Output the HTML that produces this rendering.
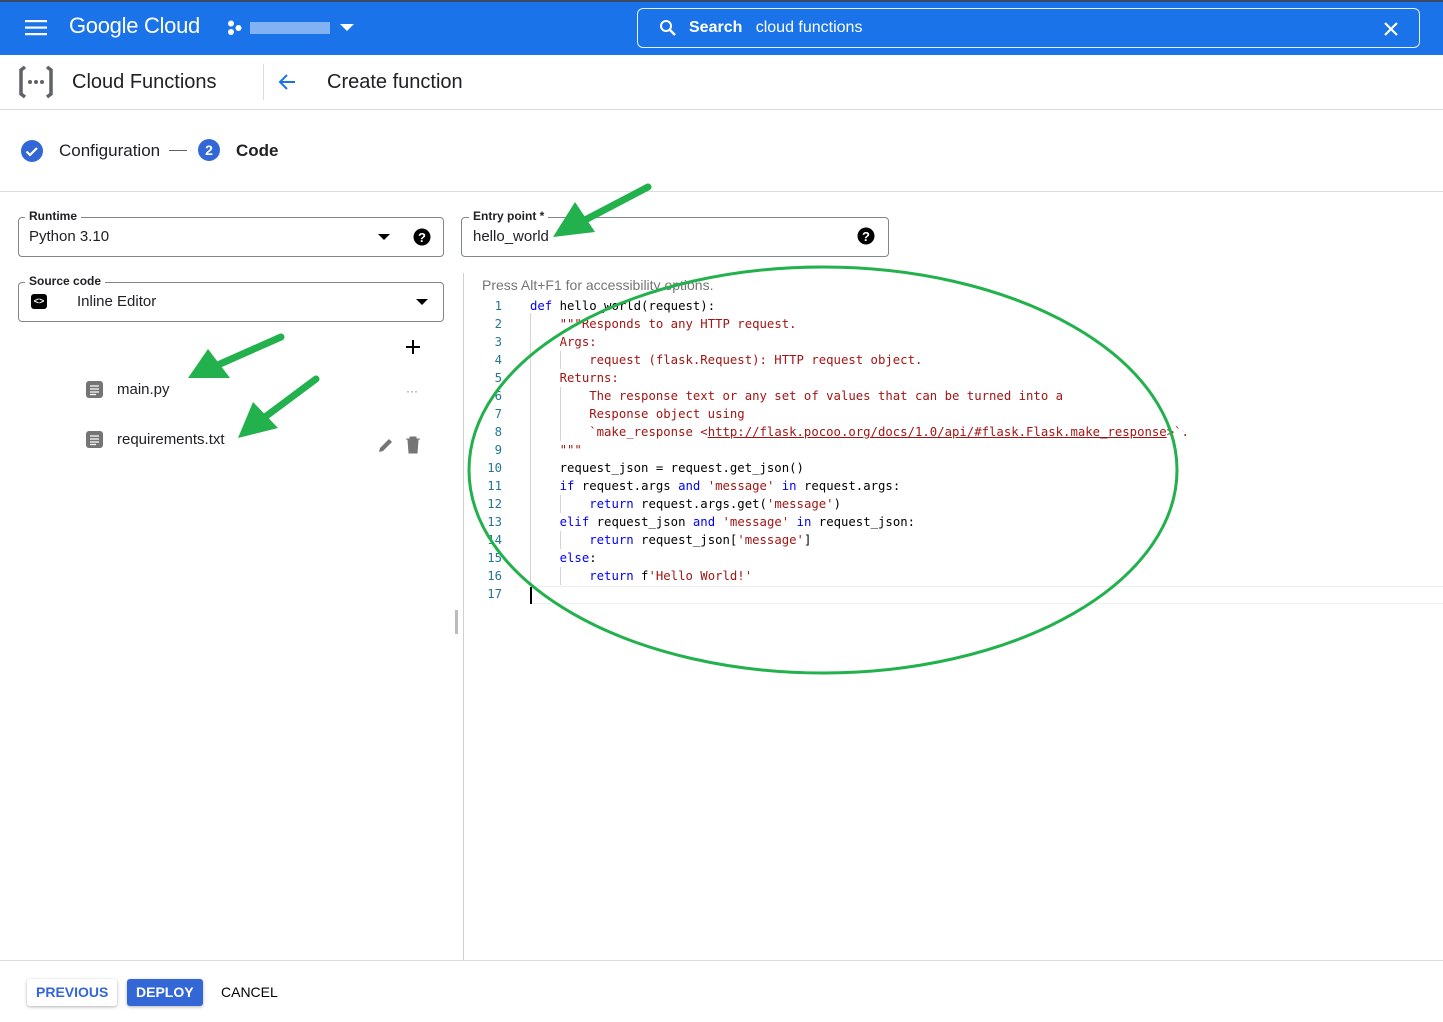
<!DOCTYPE html>
<html><head><meta charset="utf-8"><style>
*{box-sizing:border-box;margin:0;padding:0}
body{width:1443px;height:1022px;position:relative;background:#fff;font-family:"Liberation Sans",Roboto,sans-serif;color:#202124;overflow:hidden}
.a{position:absolute}
.hdr{left:0;top:0;width:1443px;height:55px;background:#1a73e8;border-top:2px solid #3c4a66}
.fld{border:1px solid #80868b;border-radius:4px}
.lbl{font-size:12px;font-weight:bold;background:#fff;padding:0 4px;color:#202124}
.code{font-family:"DejaVu Sans Mono",monospace;font-size:12.3px;line-height:18px;white-space:pre;color:#000}
.ln{font-family:"DejaVu Sans Mono",monospace;font-size:12.3px;line-height:18px;color:#237893;text-align:right;width:40px;white-space:pre}
.k{color:#0000ff}.s{color:#a31515}
.btn{font-size:14px;font-weight:bold;height:27px;line-height:27px;padding:0 9px;border-radius:3px}
</style></head><body>
<div class="a hdr"></div>
<svg class="a" style="left:25px;top:19px" width="24" height="18"><rect y="1" width="22" height="2.2" fill="#fff"/><rect y="7.5" width="22" height="2.2" fill="#fff"/><rect y="14" width="22" height="2.2" fill="#fff"/></svg>
<div class="a" style="left:69px;top:13px;color:#fff;font-size:22px;letter-spacing:-0.3px">Google Cloud</div>
<svg class="a" style="left:227px;top:20px" width="16" height="16"><circle cx="4" cy="3.5" r="3" fill="#fff"/><circle cx="4" cy="12" r="3" fill="#fff"/><circle cx="11.5" cy="8" r="3" fill="#fff"/></svg>
<div class="a" style="left:250px;top:22px;width:80px;height:12px;background:#9cc2f5;opacity:.8"></div>
<svg class="a" style="left:340px;top:24px" width="14" height="8"><path d="M0 0h14L7 7z" fill="#fff"/></svg>
<div class="a" style="left:637px;top:8px;width:783px;height:40px;border:1px solid #e8f0fe;border-radius:6px"></div>
<svg class="a" style="left:659px;top:19px" width="18" height="18"><circle cx="7" cy="7" r="5" stroke="#fff" stroke-width="2" fill="none"/><path d="M11 11l5 5" stroke="#fff" stroke-width="2.4"/></svg>
<div class="a" style="left:689px;top:19px;color:#fff;font-size:16px"><b>Search</b>&nbsp;&nbsp; cloud functions</div>
<svg class="a" style="left:1383px;top:21px" width="16" height="16"><path d="M2 2l12 12M14 2L2 14" stroke="#fff" stroke-width="2.2"/></svg>

<svg class="a" style="left:18px;top:65px" width="36" height="34"><path d="M7 2L3 5v24l4 3M29 2l4 3v24l-4 3" stroke="#5f6368" stroke-width="3.5" fill="none"/><circle cx="12" cy="17" r="2" fill="#5f6368"/><circle cx="18" cy="17" r="2" fill="#5f6368"/><circle cx="24" cy="17" r="2" fill="#5f6368"/></svg>
<div class="a" style="left:72px;top:71px;font-size:20px">Cloud Functions</div>
<div class="a" style="left:263px;top:64px;width:1px;height:36px;background:#dadce0"></div>
<svg class="a" style="left:277px;top:73px" width="20" height="18"><path d="M18 9H3M10 2L3 9l7 7" stroke="#1a73e8" stroke-width="2" fill="none"/></svg>
<div class="a" style="left:327px;top:71px;font-size:20px">Create function</div>
<div class="a" style="left:0;top:109px;width:1443px;height:1px;background:#dadce0"></div>

<svg class="a" style="left:20px;top:139px" width="24" height="24"><circle cx="12" cy="12" r="11" fill="#3367d6"/><path d="M6.5 12.5l3.5 3.5 7-7" stroke="#fff" stroke-width="2.2" fill="none"/></svg>
<div class="a" style="left:59px;top:141px;font-size:17px">Configuration</div>
<div class="a" style="left:169px;top:150px;width:18px;height:1px;background:#5f6368"></div>
<div class="a" style="left:198px;top:139px;width:22px;height:22px;border-radius:50%;background:#3367d6;color:#fff;font-size:14px;font-weight:bold;text-align:center;line-height:22px">2</div>
<div class="a" style="left:236px;top:141px;font-size:17px;font-weight:bold">Code</div>
<div class="a" style="left:0;top:191px;width:1443px;height:1px;background:#dadce0"></div>

<div class="a fld" style="left:18px;top:217px;width:426px;height:40px"></div>
<div class="a lbl" style="left:25px;top:209px">Runtime</div>
<div class="a" style="left:29px;top:228px;font-size:15px">Python 3.10</div>
<svg class="a" style="left:378px;top:234px" width="12" height="6"><path d="M0 0h12L6 6z" fill="#000"/></svg>
<svg class="a" style="left:413px;top:228px" width="18" height="18"><circle cx="9" cy="9" r="8.5"/><text x="9" y="14" fill="#fff" font-size="13" font-weight="bold" text-anchor="middle" font-family="Liberation Sans">?</text></svg>

<div class="a fld" style="left:18px;top:282px;width:426px;height:40px"></div>
<div class="a lbl" style="left:25px;top:274px">Source code</div>
<div class="a" style="left:31px;top:294px;width:16px;height:15px;background:#000;border-radius:3px;color:#fff;font-size:9px;font-weight:bold;text-align:center;line-height:15px">&lt;&gt;</div>
<div class="a" style="left:77px;top:293px;font-size:15px">Inline Editor</div>
<svg class="a" style="left:416px;top:299px" width="12" height="6"><path d="M0 0h12L6 6z" fill="#000"/></svg>

<svg class="a" style="left:405px;top:339px" width="16" height="16"><path d="M8 1v14M1 8h14" stroke="#000" stroke-width="2"/></svg>
<svg class="a" style="left:86px;top:381px" width="17" height="17"><rect width="17" height="17" rx="3" fill="#757575"/><path d="M4 5h9M4 8h9M4 11h9M4 13.5h6" stroke="#fff" stroke-width="1.2"/></svg>
<div class="a" style="left:117px;top:381px;font-size:15px">main.py</div>
<div class="a" style="left:406px;top:384px;font-size:12px;color:#757575">···</div>
<svg class="a" style="left:86px;top:431px" width="17" height="17"><rect width="17" height="17" rx="3" fill="#757575"/><path d="M4 5h9M4 8h9M4 11h9M4 13.5h6" stroke="#fff" stroke-width="1.2"/></svg>
<div class="a" style="left:117px;top:431px;font-size:15px">requirements.txt</div>
<svg class="a" style="left:377px;top:436px" width="18" height="18"><path d="M2 16l1-4 9-9 3 3-9 9z" fill="#757575"/></svg>
<svg class="a" style="left:405px;top:436px" width="16" height="18"><path d="M1 3h14M5 3V1h6v2M3 4h10l-1 13H4z" fill="#757575" stroke="#757575"/></svg>

<div class="a fld" style="left:461px;top:217px;width:428px;height:40px"></div>
<div class="a lbl" style="left:469px;top:209px">Entry point *</div>
<div class="a" style="left:473px;top:228px;font-size:15px">hello_world</div>
<svg class="a" style="left:857px;top:227px" width="18" height="18"><circle cx="9" cy="9" r="8.5"/><text x="9" y="14" fill="#fff" font-size="13" font-weight="bold" text-anchor="middle" font-family="Liberation Sans">?</text></svg>

<div class="a" style="left:463px;top:273px;width:1px;height:687px;background:#d0d0d0"></div>
<div class="a" style="left:455px;top:610px;width:3px;height:24px;background:#bbb"></div>
<div class="a" style="left:482px;top:277px;font-size:14px;color:#757575">Press Alt+F1 for accessibility options.</div>
<div class="a" style="left:530px;top:586px;width:913px;height:18px;border-top:1px solid #eee;border-bottom:1px solid #eee"></div>
<div class="a" style="left:530px;top:313px;width:1px;height:273px;background:#d3d3d3"></div>
<div class="a" style="left:560px;top:351px;width:1px;height:18px;background:#d3d3d3"></div>
<div class="a" style="left:560px;top:387px;width:1px;height:54px;background:#d3d3d3"></div>
<div class="a" style="left:560px;top:495px;width:1px;height:18px;background:#d3d3d3"></div>
<div class="a" style="left:560px;top:531px;width:1px;height:18px;background:#d3d3d3"></div>
<div class="a" style="left:560px;top:567px;width:1px;height:18px;background:#d3d3d3"></div>
<div class="a" style="left:530px;top:587px;width:2px;height:17px;background:#000"></div>
<div class="a ln" style="left:462px;top:297px">1
2
3
4
5
6
7
8
9
10
11
12
13
14
15
16
17</div>
<div class="a code" style="left:530px;top:297px"><span class="k">def</span> hello_world(request):
    <span class="s">"""Responds to any HTTP request.
    Args:
        request (flask.Request): HTTP request object.
    Returns:
        The response text or any set of values that can be turned into a
        Response object using
        `make_response &lt;<u>http://flask.pocoo.org/docs/1.0/api/#flask.Flask.make_response</u>&gt;`.
    """</span>
    request_json = request.get_json()
    <span class="k">if</span> request.args <span class="k">and</span> <span class="s">'message'</span> <span class="k">in</span> request.args:
        <span class="k">return</span> request.args.get(<span class="s">'message'</span>)
    <span class="k">elif</span> request_json <span class="k">and</span> <span class="s">'message'</span> <span class="k">in</span> request_json:
        <span class="k">return</span> request_json[<span class="s">'message'</span>]
    <span class="k">else</span>:
        <span class="k">return</span> f<span class="s">'Hello World!'</span>
</div>

<div class="a" style="left:0;top:960px;width:1443px;height:1px;background:#dadce0"></div>
<div class="a btn" style="left:27px;top:979px;color:#3367d6;background:#fff;box-shadow:0 1px 3px rgba(0,0,0,.3)">PREVIOUS</div>
<div class="a btn" style="left:127px;top:979px;color:#fff;background:#3367d6;box-shadow:0 1px 3px rgba(0,0,0,.3)">DEPLOY</div>
<div class="a btn" style="left:212px;top:979px;color:#000;font-weight:normal">CANCEL</div>

<svg class="a" style="left:0;top:0" width="1443" height="1022">
<ellipse cx="823" cy="470" rx="354" ry="203" fill="none" stroke="#22b14c" stroke-width="3"/>
<g stroke="#22b14c" stroke-width="7" stroke-linecap="round" fill="#22b14c">
<line x1="648" y1="187" x2="585" y2="220"/>
<line x1="281" y1="337" x2="220" y2="364"/>
<line x1="316" y1="379" x2="265" y2="417"/>
</g>
<g fill="#22b14c">
<polygon points="553,237 575,202 595,232"/>
<polygon points="188,378 208,349 230,378"/>
<polygon points="238,438 253,402 278,428"/>
</g>
</svg>
</body></html>
